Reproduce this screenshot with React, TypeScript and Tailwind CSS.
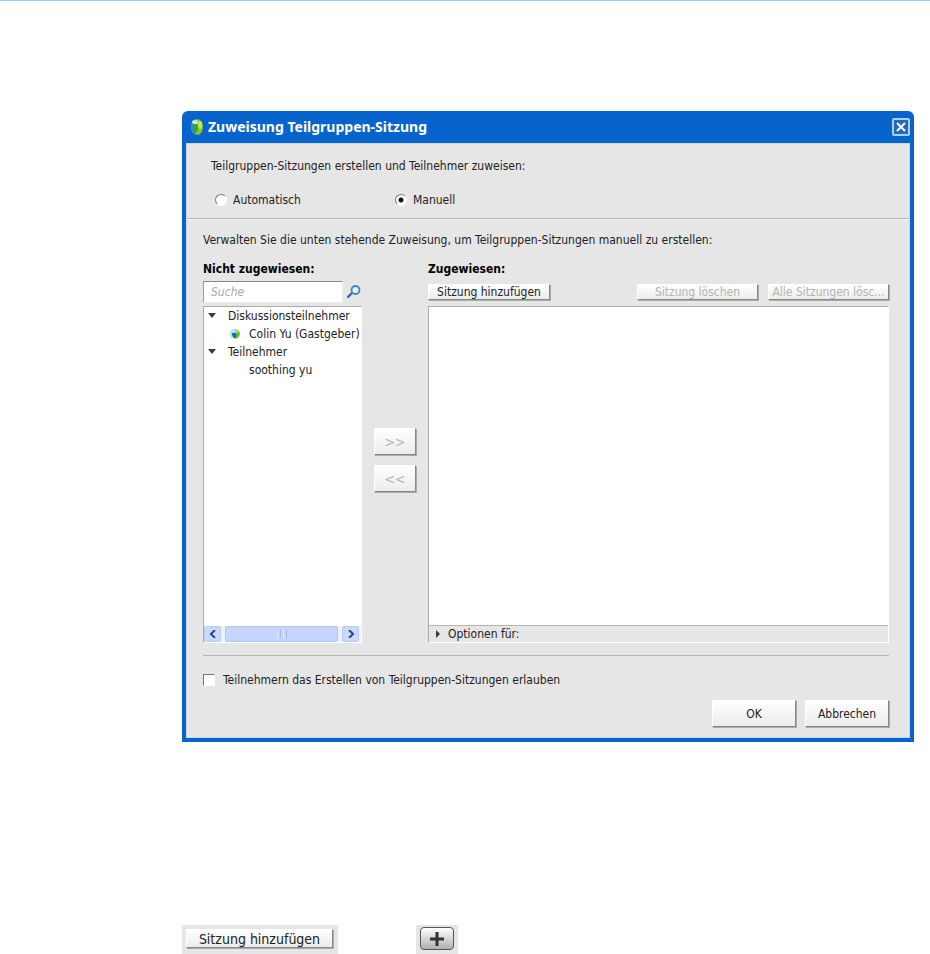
import { useState } from 'react';
import type { ReactNode } from 'react';

const raised =
  'border border-t-white border-l-white border-r-[#888] border-b-[#888] bg-linear-to-b from-white to-[#ececec] shadow-[1px_1px_0_#aaa]';

function PushButton({
  children,
  className,
  disabled = false,
}: {
  children: ReactNode;
  className: string;
  disabled?: boolean;
}) {
  return (
    <button
      type="button"
      disabled={disabled}
      className={`flex items-center justify-center whitespace-nowrap ${raised} ${disabled ? 'text-[#b4b4ac]' : 'text-[#222]'} ${className}`}
    >
      {children}
    </button>
  );
}

function Globe({ className }: { className: string }) {
  return (
    <svg viewBox="0 0 14 18" className={className} aria-hidden="true">
      <ellipse cx="7" cy="9" rx="6" ry="8" fill="#84c82c" />
      <path d="M7 1C3 2 1 5 1 9s2 7 6 8c-2-3-3-5-3-8s1-6 3-8Z" fill="#2b8fc4" />
      <path d="M5 4c2 2 3 4 3 6s-1 4-3 5c-2-3-1-8 0-11Z" fill="#3e9e35" />
      <ellipse cx="5" cy="4" rx="3" ry="2" fill="#d9f4fb" opacity=".85" />
      <ellipse cx="10" cy="7" rx="2" ry="4" fill="#d3f05c" opacity=".8" />
    </svg>
  );
}

function Presence() {
  return (
    <svg viewBox="0 0 12 12" className="size-3 shrink-0" aria-hidden="true">
      <circle cx="6" cy="6" r="5" fill="#a5dc6a" />
      <path d="M6 1a5 5 0 0 0 0 10Z" fill="#b8e0f8" />
      <path d="M3 5h4v5C4 10 3 8 3 5Z" fill="#1667b8" />
      <path d="M7 6c1-1 3-2 3-3 1 4 0 6-3 7Z" fill="#5fb52e" />
    </svg>
  );
}

function Twisty({ open = true }: { open?: boolean }) {
  return (
    <svg viewBox="0 0 8 8" className="size-2 shrink-0" aria-hidden="true">
      <path d={open ? 'M0 1h8L4 6Z' : 'M2 0l4 4-4 4Z'} fill="#333a58" />
    </svg>
  );
}

function Group({ label, children }: { label: string; children: ReactNode }) {
  return (
    <li>
      <button type="button" className="flex h-[18px] items-center gap-3 pl-1">
        <Twisty />
        {label}
      </button>
      <ul>{children}</ul>
    </li>
  );
}

function ScrollArrow({ left = false }: { left?: boolean }) {
  return (
    <button
      type="button"
      aria-label={left ? 'Nach links' : 'Nach rechts'}
      className="flex h-4 w-[17px] items-center justify-center rounded-xs border border-[#b9cbf8] bg-[#c9d8fd]"
    >
      <svg viewBox="0 0 8 8" className="size-2" aria-hidden="true">
        <path d={left ? 'M6 0 2 4l4 4' : 'M2 0l4 4-4 4'} fill="none" stroke="#2c4480" strokeWidth="2" />
      </svg>
    </button>
  );
}

const radio =
  'size-3 appearance-none rounded-full border border-t-[#777] border-l-[#777] border-r-white border-b-white bg-white checked:bg-[radial-gradient(circle,#111_2px,#fff_3px)]';

export default function App() {
  const [mode, setMode] = useState('manuell');
  return (
    <div className="border-t border-[#99c9ff] bg-white pt-[110px] pr-4 pl-[182px] font-['DejaVu_Sans_Condensed','DejaVu_Sans',sans-serif] text-[12px] leading-[18px] text-[#222]">
      <section aria-labelledby="dialog-title" className="rounded-t-md bg-[#0764cd] px-1 pb-1">
        <header className="flex h-8 items-center pl-1">
          <Globe className="mr-1 h-[18px] w-[14px]" />
          <h1 id="dialog-title" className="grow font-['Noto_Sans','DejaVu_Sans',sans-serif] text-[14px] font-bold text-white">
            Zuweisung Teilgruppen-Sitzung
          </h1>
          <button
            type="button"
            aria-label="Schließen"
            className="flex size-[18px] items-center justify-center rounded-xs border-2 border-[#a9d0f8] bg-[#2068c0]"
          >
            <svg viewBox="0 0 10 10" className="size-[10px]" aria-hidden="true">
              <path d="m1 1 8 8M9 1 1 9" stroke="#fff" strokeWidth="2" />
            </svg>
          </button>
        </header>

        <div className="border border-[#c5d9ee] bg-[#e6e6e6]">
          <fieldset className="border-b border-[#b4b4b0] pt-[13px] pb-[9px] pl-6 shadow-[0_1px_0_#f2f2f2]">
            <legend className="float-left w-full">Teilgruppen-Sitzungen erstellen und Teilnehmer zuweisen:</legend>
            <div className="clear-both grid grid-cols-[180px_1fr] pt-4 pl-1">
              <label className="flex items-center gap-[6px]">
                <input type="radio" name="mode" className={radio} checked={mode === 'auto'} onChange={() => setMode('auto')} />
                Automatisch
              </label>
              <label className="flex items-center gap-[6px]">
                <input type="radio" name="mode" className={radio} checked={mode === 'manuell'} onChange={() => setMode('manuell')} />
                Manuell
              </label>
            </div>
          </fieldset>

          <div className="pt-3 pr-5 pb-[10px] pl-4">
            <p>Verwalten Sie die unten stehende Zuweisung, um Teilgruppen-Sitzungen manuell zu erstellen:</p>

            <div className="flex gap-3 pt-[11px]">
              <section className="flex w-[159px] flex-col">
                <h2 className="font-bold text-black">Nicht zugewiesen:</h2>
                <div className="mt-[3px] flex items-center gap-1">
                  <input
                    type="text"
                    placeholder="Suche"
                    aria-label="Suche"
                    className="h-[22px] w-[140px] border border-t-[#888] border-l-[#999] border-r-[#eee] border-b-[#eee] bg-white px-[7px] italic placeholder:text-[#aaa]"
                  />
                  <svg viewBox="0 0 14 14" className="size-[14px]" aria-hidden="true">
                    <path d="m1 12 4-4" stroke="#3566aa" strokeWidth="2.4" strokeLinecap="round" />
                    <circle cx="8.5" cy="5" r="4" fill="#e4f3fc" stroke="#3b86c8" strokeWidth="1.8" />
                  </svg>
                </div>
                <div className="mt-[3px] flex h-[337px] flex-col justify-between overflow-hidden border border-t-[#aaa] border-r-white border-b-white border-l-[#aaa] bg-white">
                  <ul className="whitespace-nowrap">
                    <Group label="Diskussionsteilnehmer">
                      <li className="flex items-center gap-2 pl-[25px]">
                        <Presence />
                        Colin Yu (Gastgeber)
                      </li>
                    </Group>
                    <Group label="Teilnehmer">
                      <li className="pl-[45px]">soothing yu</li>
                    </Group>
                  </ul>
                  <div className="flex bg-[#f0f2fb] pr-[2px]">
                    <ScrollArrow left />
                    <div className="flex grow px-1">
                      <div className="flex grow items-center justify-center gap-[2px] rounded-xs border border-[#b5c6f3] bg-[#c6d5fd]">
                        <i className="h-2 w-px bg-[#e5ecff]" />
                        <i className="h-2 w-px bg-[#a4b9ef]" />
                        <i className="h-2 w-px bg-[#e5ecff]" />
                        <i className="h-2 w-px bg-[#a4b9ef]" />
                      </div>
                    </div>
                    <ScrollArrow />
                  </div>
                </div>
              </section>

              <div className="flex flex-col gap-[10px] pt-[168px]">
                <PushButton disabled className="h-[27px] w-[42px] text-[14px]">&gt;&gt;</PushButton>
                <PushButton disabled className="h-[27px] w-[42px] text-[14px]">&lt;&lt;</PushButton>
              </div>

              <section className="flex min-w-0 grow flex-col">
                <h2 className="font-bold text-black">Zugewiesen:</h2>
                <div className="mt-[6px] flex gap-[10px]">
                  <PushButton className="mr-auto h-4 w-[122px]">Sitzung hinzufügen</PushButton>
                  <PushButton disabled className="h-4 w-[121px]">Sitzung löschen</PushButton>
                  <PushButton disabled className="h-4 w-[121px]">Alle Sitzungen lösc...</PushButton>
                </div>
                <div className="mt-[6px] flex grow flex-col border border-t-[#aaa] border-r-white border-b-white border-l-[#aaa] bg-white">
                  <div className="grow" />
                  <button type="button" className="flex h-[17px] items-center gap-[6px] border-t border-[#b4b4b4] bg-[#e6e6e6] pl-[5px]">
                    <Twisty open={false} />
                    Optionen für:
                  </button>
                </div>
              </section>
            </div>

            <hr className="mt-3 border-[#b4b4b4]" />
            <label className="mt-[15px] flex items-center gap-2">
              <input
                type="checkbox"
                className="size-3 appearance-none border border-t-[#777] border-l-[#777] border-r-white border-b-white bg-white checked:bg-[#555]"
              />
              Teilnehmern das Erstellen von Teilgruppen-Sitzungen erlauben
            </label>
            <div className="mt-[11px] flex justify-end gap-[9px]">
              <PushButton className="h-[27px] w-[84px]">OK</PushButton>
              <PushButton className="h-[27px] w-[84px]">Abbrechen</PushButton>
            </div>
          </div>
        </div>
      </section>

      <div className="flex gap-[78px] pt-[183px]">
        <div className="bg-[#e6e6e6] p-1 pr-[5px] pb-[6px]">
          <PushButton className="h-[19px] w-[147px] text-[14px]">Sitzung hinzufügen</PushButton>
        </div>
        <div className="flex bg-[#e6e6e6] px-1 pt-[2px] pb-1">
          <button
            type="button"
            aria-label="Hinzufügen"
            className="flex h-[23px] w-[34px] items-center justify-center rounded-sm border border-[#555] bg-linear-to-b from-white to-[#b0b0b0]"
          >
            <svg viewBox="0 0 14 14" className="size-[14px]" aria-hidden="true">
              <path d="M7 0v14M0 7h14" stroke="#333" strokeWidth="3" />
            </svg>
          </button>
        </div>
      </div>
    </div>
  );
}
